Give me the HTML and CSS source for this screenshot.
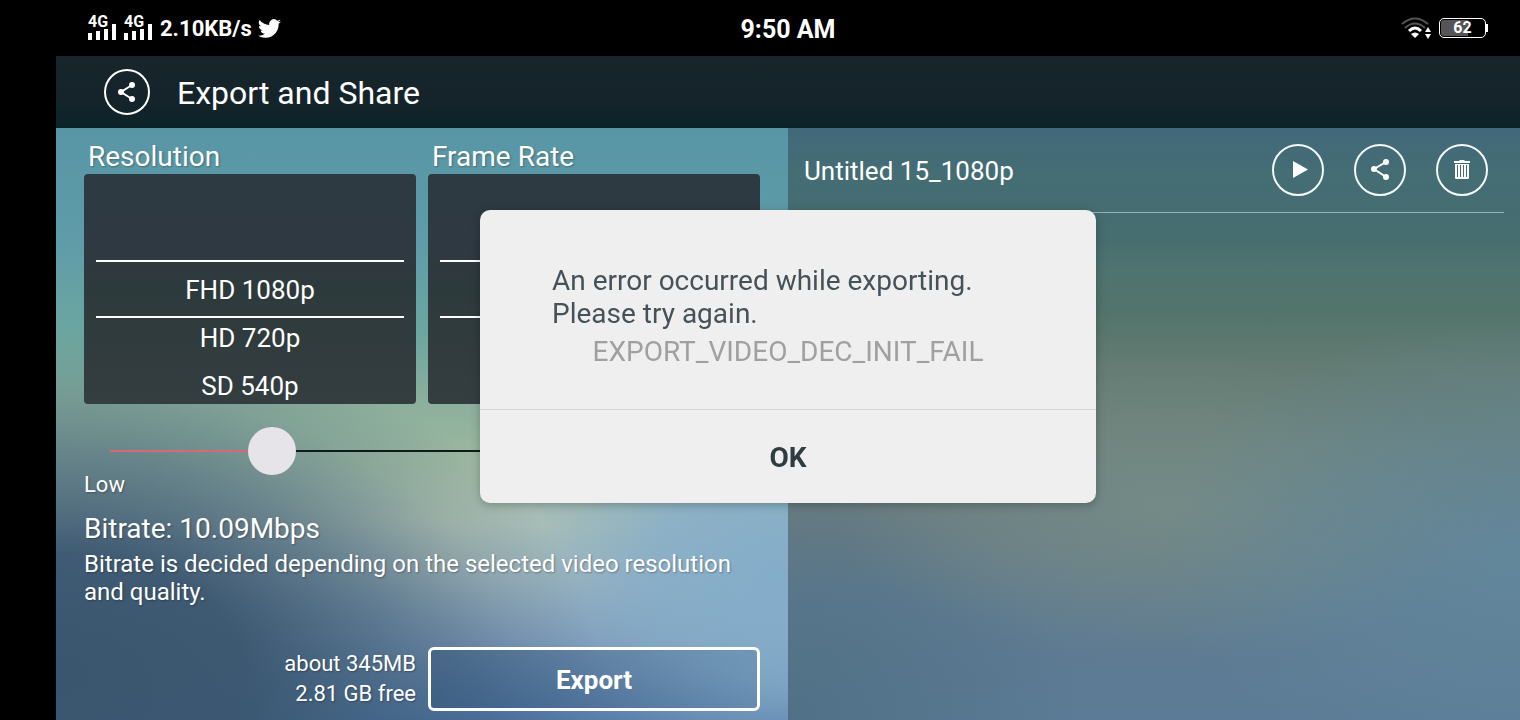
FILE: index.html
```
<!DOCTYPE html>
<html lang="en">
<head>
<meta charset="utf-8">
<title>Export and Share</title>
<link rel="stylesheet" href="styles.css">
</head>
<body>

	<div class="statusbar">
		<div class="status-left">
			<svg class="signal" width="30" height="36" viewBox="0 0 30 36">
				<text x="0" y="17">4G</text>
				<path d="M0 23h4v7h-4zM8 21h4v9h-4zM16 19h4v11h-4zM24 14h4v16h-4z"/>
			</svg>
			<svg class="signal" width="30" height="36" viewBox="0 0 30 36">
				<text x="0" y="17">4G</text>
				<path d="M0 23h4v7h-4zM8 21h4v9h-4zM16 19h4v11h-4zM24 14h4v16h-4z"/>
			</svg>
			<span class="speed">2.10KB/s</span>
			<svg class="bird" width="23" height="23" viewBox="0 0 24 24">
				<path d="M23.95 4.57a10 10 0 0 1-2.82.77 4.96 4.96 0 0 0 2.16-2.72c-.95.55-2 .96-3.13 1.18a4.92 4.92 0 0 0-8.38 4.48C7.69 8.1 4.07 6.13 1.64 3.16a4.92 4.92 0 0 0 1.52 6.57 4.9 4.9 0 0 1-2.23-.61v.06a4.92 4.92 0 0 0 3.95 4.83 5 5 0 0 1-2.21.08 4.94 4.94 0 0 0 4.6 3.42A9.87 9.87 0 0 1 0 19.54a14 14 0 0 0 7.55 2.21c9.05 0 14-7.5 14-13.98 0-.21 0-.42-.02-.63a9.94 9.94 0 0 0 2.42-2.57z"/>
			</svg>
		</div>
		<div class="clock">9:50 AM</div>
		<div class="status-right">
			<svg width="32" height="24" viewBox="0 0 32 24" fill="none">
				<path class="wifi-off" d="M1 8Q14-3 27 8M4 12Q14 3 24 12"/>
				<path class="wifi-on" d="M8 15Q14 9 20 15"/>
				<path class="wifi-dot" d="M10 18q4-3 8 0l-4 4z"/>
				<path class="wifi-dot" d="M24 16l3-5 3 5zM24 18h6l-3 5z"/>
			</svg>
			<div class="battery"><span>62</span></div>
		</div>
	</div>

	<div class="app">
		<header class="titlebar">
			<svg class="title-icon" width="46" height="46" viewBox="0 0 46 46">
				<circle cx="23" cy="23" r="22"/>
				<path class="link" d="M28 16L17 23l11 7"/>
				<path class="solid" d="M17 20a3 3 0 1 0 0 6 3 3 0 0 0 0-6zM28 13a3 3 0 1 0 0 6 3 3 0 0 0 0-6zM28 27a3 3 0 1 0 0 6 3 3 0 0 0 0-6z"/>
			</svg>
			<h1>Export and Share</h1>
		</header>

		<main class="panels">
			<section class="settings">
				<div class="pickers">
					<div class="picker-group">
						<h2 id="res">Resolution</h2>
						<div class="picker" role="radiogroup" aria-labelledby="res">
							<label><input type="radio" name="res" checked>FHD 1080p</label>
							<label><input type="radio" name="res">HD 720p</label>
							<label><input type="radio" name="res">SD 540p</label>
						</div>
					</div>
					<div class="picker-group">
						<h2 id="fps">Frame Rate</h2>
						<div class="picker" role="group" aria-labelledby="fps"></div>
					</div>
				</div>

				<input class="quality" id="quality" type="range" min="0" max="100" value="26">
				<label class="low" for="quality">Low</label>

				<p class="bitrate">Bitrate: 10.09Mbps</p>
				<p class="note">Bitrate is decided depending on the selected video resolution and quality.</p>

				<div class="export-row">
					<div class="space">about 345MB<br>2.81 GB free</div>
					<button class="export" type="button">Export</button>
				</div>
			</section>

			<section class="files">
				<div class="file">
					<span class="file-name">Untitled 15_1080p</span>
					<button class="round" type="button" aria-label="Play">
						<svg width="52" height="52" viewBox="0 0 52 52">
							<path class="solid" d="M21 17v17l15-8.500z"/>
						</svg>
					</button>
					<button class="round" type="button" aria-label="Share">
						<svg width="52" height="52" viewBox="0 0 52 52">
							<path class="link" d="M32 18L20 25l12 8"/>
							<path class="solid" d="M20 22a3 3 0 1 0 0 6 3 3 0 0 0 0-6zM32 15a3 3 0 1 0 0 6 3 3 0 0 0 0-6zM32 30a3 3 0 1 0 0 6 3 3 0 0 0 0-6z"/>
						</svg>
					</button>
					<button class="round" type="button" aria-label="Delete">
						<svg width="52" height="52" viewBox="0 0 52 52">
							<path class="solid" d="M18 17h5l1-1h4l1 1h5v2H18z"/>
							<path class="solid" fill-rule="evenodd" d="M19 20h14v14q0 1-1 1H20q-1 0-1-1zM21 21v12h1V21zM24 21v12h1V21zM27 21v12h1V21zM30 21v12h1V21z"/>
						</svg>
					</button>
				</div>
			</section>
		</main>
	</div>

	<div class="overlay">
		<div class="dialog" role="alertdialog" aria-labelledby="msg">
			<div class="dialog-body">
				<p id="msg">An error occurred while exporting.<br>Please try again.</p>
				<p class="code">EXPORT_VIDEO_DEC_INIT_FAIL</p>
			</div>
			<button class="ok" type="button">OK</button>
		</div>
	</div>

</body>
</html>
```
FILE: styles.css
```
* {
	box-sizing: border-box;
}

body {
	margin: 0;
	min-height: 100vh;
	display: flex;
	flex-direction: column;
	background: #000;
	color: #fff;
	font-family: Roboto, "Liberation Sans", sans-serif;
}

h1, h2, p {
	margin: 0;
	font-weight: 400;
}

button {
	padding: 0;
	font-family: inherit;
	cursor: pointer;
}

svg {
	display: block;
}

/* phone status bar */
.statusbar {
	display: grid;
	grid-template-columns: 1fr auto 1fr;
	align-items: center;
	height: 56px;
	padding: 0 32px 0 88px;
}

.status-left, .status-right {
	display: flex;
	align-items: center;
}

.status-left {
	gap: 6px;
	fill: #fff;
}

.status-right {
	justify-content: flex-end;
	gap: 6px;
	padding-right: 2px;
}

.signal text {
	font-size: 16px;
	font-weight: 700;
}

.speed {
	font-size: 22px;
	font-weight: 700;
	line-height: 30px;
	padding-top: 2px;
}

.clock {
	padding-top: 2px;
	font-size: 25px;
	font-weight: 700;
}

.wifi-off {
	stroke: #555;
	stroke-width: 2;
}

.wifi-on {
	stroke: #fff;
	stroke-width: 3;
}

.wifi-dot {
	fill: #fff;
}

.battery {
	position: relative;
	width: 47px;
	height: 20px;
	padding: 1px;
	border: 1px solid #fff;
	border-radius: 5px;
	background: linear-gradient(to right, #555 62%, #000 62%);
	background-clip: content-box;
	font-size: 16px;
	font-weight: 700;
	line-height: 16px;
	text-align: center;
}

.battery::after {
	content: "";
	position: absolute;
	top: 5px;
	right: -3px;
	width: 2px;
	height: 8px;
	background: #fff;
}

/* app */
.app {
	flex: 1;
	display: flex;
	flex-direction: column;
	margin-left: 56px;
}

.titlebar {
	display: flex;
	align-items: center;
	gap: 27px;
	height: 72px;
	padding: 0 48px;
	background: linear-gradient(#18262c, #15242a 60%, #0c232a);
}

.titlebar h1 {
	padding-top: 2px;
	font-size: 32px;
	line-height: 40px;
}

.title-icon circle {
	fill: none;
	stroke: #fff;
	stroke-width: 2;
}

.link {
	fill: none;
	stroke: #fff;
	stroke-width: 2;
}

.solid {
	fill: #fff;
}

.panels {
	flex: 1;
	display: grid;
	grid-template-columns: 1fr 1fr;
}

.settings {
	display: flex;
	flex-direction: column;
	padding: 13px 28px 9px;
	text-shadow: 1px 1px 2px rgba(0, 0, 0, 0.3);
	background:
		radial-gradient(ellipse 74% 58% at 0 92%, #3a566f, rgba(58, 86, 111, 0.95) 35%, rgba(62, 94, 120, 0.6) 62%, rgba(64, 100, 125, 0.2) 84%, rgba(64, 100, 125, 0)),
		radial-gradient(ellipse 48% 44% at 100% 76%, #84adca, rgba(132, 173, 202, 0.8) 40%, rgba(132, 173, 202, 0.25) 72%, rgba(132, 173, 202, 0)),
		linear-gradient(#5896a6, #5f9ca8 20%, #6ea79f 36%, #8db09c 47%, #9cb7a0 56%, #b2c2b2 67%, #a3b5b8 76%, #8299b6 86%, #5c7ea6 95%, #4d71a0);
}

.pickers {
	display: grid;
	grid-template-columns: 1fr 1fr;
	gap: 12px;
}

.picker-group h2 {
	margin-bottom: 1px;
	padding-left: 4px;
	font-size: 28px;
	line-height: 32px;
}

.picker {
	position: relative;
	height: 230px;
	padding-top: 92px;
	overflow: hidden;
	border-radius: 4px;
	background: linear-gradient(#2d3a42, #2f3941 36%, #2d3a3c 50%, #323c3e 80%, #343d40);
	text-align: center;
	text-shadow: none;
}

/* frame round the chosen row */
.picker::after {
	content: "";
	position: absolute;
	top: 86px;
	left: 12px;
	right: 12px;
	height: 54px;
	border: solid #fff;
	border-width: 2px 0;
	pointer-events: none;
}

.picker label {
	display: block;
	font-size: 26px;
	line-height: 48px;
}

.picker input {
	position: absolute;
	opacity: 0;
}

.quality {
	appearance: none;
	-webkit-appearance: none;
	height: 48px;
	margin: 23px 2px 0;
	background: none;
}

.quality::-webkit-slider-runnable-track {
	height: 2px;
	background: linear-gradient(to right,
		transparent 24px, #dc6672 24px, #dc6672 30%,
		#111a1a 30%, #111a1a calc(100% - 24px), transparent calc(100% - 24px));
}

.quality::-webkit-slider-thumb {
	-webkit-appearance: none;
	width: 48px;
	height: 48px;
	margin-top: -23px;
	border-radius: 50%;
	background: #e6e4e8;
}

.low {
	font-size: 22px;
	line-height: 20px;
}

.bitrate {
	margin-top: 18px;
	font-size: 28px;
	line-height: 32px;
}

.note {
	margin-top: 5px;
	font-size: 24px;
	line-height: 28px;
}

.export-row {
	display: grid;
	grid-template-columns: 1fr 1fr;
	align-items: center;
	gap: 12px;
	margin-top: auto;
}

.space {
	font-size: 22px;
	line-height: 30px;
	text-align: right;
}

.export {
	height: 64px;
	padding-top: 2px;
	border: 3px solid #fff;
	border-radius: 6px;
	background: linear-gradient(to right, rgba(50, 85, 120, 0.5), rgba(60, 95, 140, 0.25));
	color: #fff;
	font-size: 26px;
	font-weight: 700;
}

.files {
	padding: 0 16px;
	background:
		radial-gradient(ellipse 50% 40% at 100% 72%, rgba(98, 138, 160, 0.8), rgba(98, 138, 160, 0.4) 55%, rgba(98, 138, 160, 0)),
		radial-gradient(ellipse 46% 26% at 52% 64%, rgba(120, 142, 136, 0.8), rgba(120, 142, 136, 0.4) 55%, rgba(120, 142, 136, 0)),
		radial-gradient(ellipse 40% 40% at 0 100%, rgba(76, 110, 130, 0.8), rgba(76, 110, 130, 0)),
		linear-gradient(#42697b, #446d74 8%, #466d70 18%, #4f7370 24%, #53746b 31%, #637b72 40%, #6a7f78 54%, #667b84 68%, #5f7a90 80%, #5c7b96);
}

.file {
	display: flex;
	align-items: center;
	gap: 30px;
	height: 85px;
	padding-right: 16px;
	border-bottom: 1px solid #94b4b4;
}

.file-name {
	flex: 1;
	padding-top: 2px;
	font-size: 26px;
}

.round {
	width: 52px;
	height: 52px;
	border: 2px solid #f4fafa;
	border-radius: 50%;
	background: none;
}

.round svg {
	margin: -2px;
}

/* error dialog */
.overlay {
	position: fixed;
	inset: 0 0 0 56px;
	display: grid;
	place-items: center;
	padding-bottom: 7px;
}

.dialog {
	width: 616px;
	max-width: 90%;
	border-radius: 10px;
	overflow: hidden;
	background: #efefef;
	box-shadow: 0 2px 10px rgba(0, 0, 0, 0.25);
	color: #46525a;
}

.dialog-body {
	padding: 54px 72px 35px;
	font-size: 28px;
	line-height: 33px;
}

.code {
	color: #a0a0a0;
	line-height: 44px;
	text-align: center;
}

.ok {
	display: block;
	width: 100%;
	height: 94px;
	padding-top: 2px;
	border: 0;
	border-top: 1px solid #d4d4d4;
	background: none;
	color: #2f3d42;
	font-size: 28px;
	font-weight: 700;
}
```
